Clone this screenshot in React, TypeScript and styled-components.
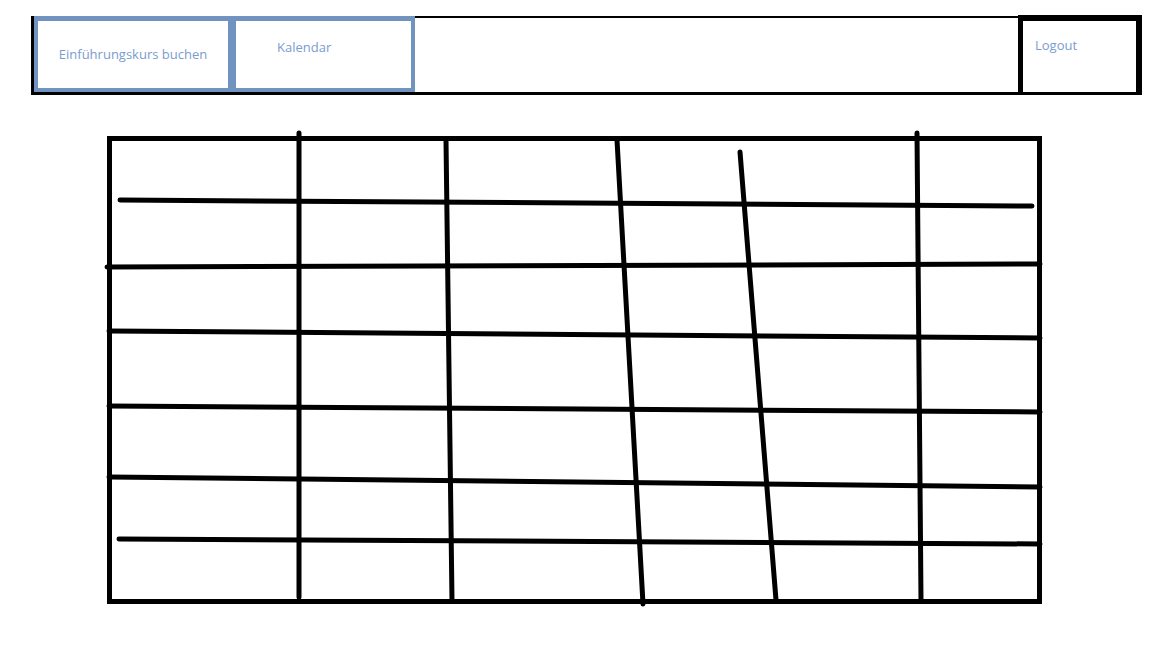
import React from 'react'
import styled, { createGlobalStyle } from 'styled-components'

const GlobalStyle = createGlobalStyle`
  html, body {
    margin: 0;
    padding: 0;
    background: #ffffff;
  }
  body {
    font-family: 'Open Sans', 'Noto Sans', sans-serif;
  }
`

// sketch origin: inner corner of the table frame (page coords)
const ORIGIN = { x: 112, y: 141 }

type Line = [number, number, number, number]

const sketchLines: Line[] = [
  // rows
  [120, 200, 1032, 206],
  [107, 267, 1040, 264],
  [109, 331, 1040, 338],
  [109, 406, 1040, 412],
  [109, 477, 1040, 487],
  [119, 539, 1040, 544],
  // columns
  [299, 133, 299, 597],
  [446, 140, 452, 601],
  [617, 140, 643, 604],
  [740, 152, 776, 600],
  [917, 133, 921, 600]
]

const Nav = () => (
  <S.NavBar>
    <S.Tab width={198} pl={0} center>
      Einführungskurs buchen
    </S.Tab>
    <S.Tab width={183} pl={41} top>
      Kalendar
    </S.Tab>
    <S.Spacer />
    <S.Logout>Logout</S.Logout>
  </S.NavBar>
)

const Sketch = () => (
  <S.Sketch>
    <g transform={`translate(${-ORIGIN.x} ${-ORIGIN.y})`}>
      {sketchLines.map(([x1, y1, x2, y2], i) => (
        <line key={i} x1={x1} y1={y1} x2={x2} y2={y2} />
      ))}
    </g>
  </S.Sketch>
)

export default function App() {
  return (
    <>
      <GlobalStyle />
      <S.Page>
        <Nav />
        <S.Table>
          <Sketch />
        </S.Table>
      </S.Page>
    </>
  )
}

const S = {
  Page: styled.div`
    width: 1152px;
    height: 648px;
    padding-top: 16px;
    box-sizing: border-box;
    overflow: hidden;
  `,
  NavBar: styled.div`
    display: flex;
    align-items: flex-start;
    width: 1111px;
    height: 79px;
    margin-left: 31px;
    box-sizing: border-box;
    border-top: 2px solid #000;
    border-bottom: 3px solid #000;
    border-left: 3px solid #000;
  `,
  Tab: styled.div<{ width: number; pl: number; center?: boolean; top?: boolean }>`
    flex: none;
    width: ${p => p.width}px;
    height: 76px;
    box-sizing: border-box;
    margin-top: -2px;
    border: 4px solid #7093c0;
    border-top-width: 5px;
    padding-left: ${p => p.pl}px;
    padding-top: ${p => (p.top ? 18 : 0)}px;
    display: flex;
    align-items: ${p => (p.center ? 'center' : 'flex-start')};
    justify-content: ${p => (p.center ? 'center' : 'flex-start')};
    color: #7a9ccf;
    font-size: 13px;
    line-height: 17px;
    white-space: nowrap;
  `,
  Spacer: styled.div`
    flex: 1;
  `,
  Logout: styled.div`
    flex: none;
    width: 124px;
    height: 77px;
    box-sizing: border-box;
    margin-top: -3px;
    border-top: 6px solid #000;
    border-left: 5px solid #000;
    border-right: 6px solid #000;
    padding: 16px 0 0 12px;
    color: #7a9ccf;
    font-size: 13px;
    line-height: 17px;
  `,
  Table: styled.div`
    width: 935px;
    height: 468px;
    margin: 41px 0 0 107px;
    box-sizing: border-box;
    border: 5px solid #000;
  `,
  Sketch: styled.svg`
    display: block;
    width: 100%;
    height: 100%;
    overflow: visible;

    line {
      stroke: #000;
      stroke-width: 5;
      stroke-linecap: round;
    }
  `
}
